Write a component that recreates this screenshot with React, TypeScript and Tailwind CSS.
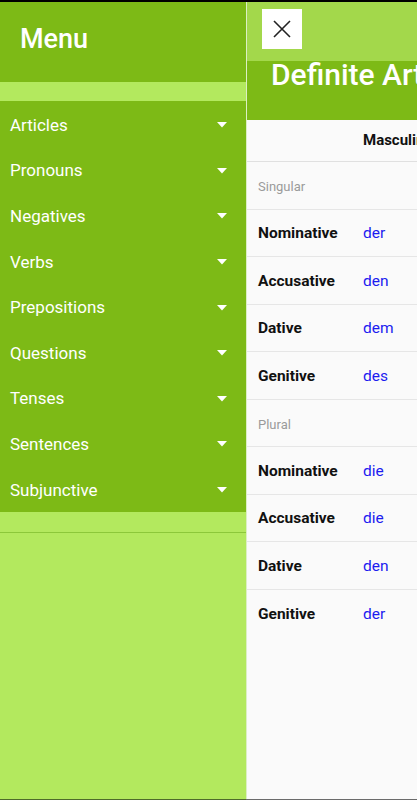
import React from "react";

const items = [
  "Articles",
  "Pronouns",
  "Negatives",
  "Verbs",
  "Prepositions",
  "Questions",
  "Tenses",
  "Sentences",
  "Subjunctive",
];

type Row = { kind: "group"; label: string } | { kind: "row"; label: string; value: string };

const rows: Row[] = [
  { kind: "group", label: "Singular" },
  { kind: "row", label: "Nominative", value: "der" },
  { kind: "row", label: "Accusative", value: "den" },
  { kind: "row", label: "Dative", value: "dem" },
  { kind: "row", label: "Genitive", value: "des" },
  { kind: "group", label: "Plural" },
  { kind: "row", label: "Nominative", value: "die" },
  { kind: "row", label: "Accusative", value: "die" },
  { kind: "row", label: "Dative", value: "den" },
  { kind: "row", label: "Genitive", value: "der" },
];

export default function App() {
  return (
    <div
      className="w-[417px] h-[800px] overflow-hidden flex flex-col bg-black"
      style={{ fontFamily: "Roboto, 'Noto Sans', sans-serif" }}
    >
      <div className="h-[2px] bg-black" />
      <div className="flex flex-1 min-h-0">
        {/* Menu drawer */}
        <div className="w-[246px] shrink-0 flex flex-col bg-[#b3e95e]">
          <div className="h-[80px] bg-[#7dba16] flex items-center pl-5 pb-[5px]">
            <span className="text-white text-[27px] font-medium leading-none">Menu</span>
          </div>
          <div className="h-[19px] bg-[#b3e95e]" />
          <div className="bg-[#7dba16] flex flex-col pt-[1px]">
            {items.map((it) => (
              <div key={it} className="h-[45.6px] flex items-center justify-between pl-[10px] pr-[19px] pt-[1px]">
                <span className="text-white text-[17px] leading-none">{it}</span>
                <svg width="10" height="6" viewBox="0 0 10 6">
                  <polygon points="0,0 10,0 5,5.5" fill="#ffffff" />
                </svg>
              </div>
            ))}
          </div>
          <div className="h-[20px] bg-[#b3e95e]" />
          <div className="h-[1px] bg-[#8cc83a]" />
          <div className="flex-1 bg-[#b3e95e]" />
        </div>
        {/* Content */}
        <div className="flex-1 flex flex-col border-l border-[#dcefc4] bg-[#fafafa] min-w-0">
          <div className="h-[59px] bg-[#a3d84b] pl-[15px] pt-[7px]">
            <div className="w-[40px] h-[40px] bg-white flex items-center justify-center">
              <svg width="20" height="20" viewBox="0 0 20 20">
                <path d="M2 2 L18 18 M18 2 L2 18" stroke="#222222" strokeWidth="1.6" fill="none" />
              </svg>
            </div>
          </div>
          <div className="h-[59px] bg-[#7dba16] pl-[24px] overflow-hidden whitespace-nowrap">
            <span className="text-white text-[30px] font-medium leading-none block -mt-[1px]">Definite Articles</span>
          </div>
          <div className="flex flex-col">
            <div className="h-[42px] flex items-center pl-[11px] border-b border-[#e0e0e0] whitespace-nowrap overflow-hidden">
              <div className="w-[105px] shrink-0" />
              <span className="text-[15px] font-bold text-[#111]">Masculine</span>
            </div>
            {rows.map((r, i) =>
              r.kind === "group" ? (
                <div key={i} className="h-[47.5px] flex items-center pl-[11px] pt-[3px] border-b border-[#e6e6e6]">
                  <span className="text-[13px] text-[#9a9a9a]">{r.label}</span>
                </div>
              ) : (
                <div
                  key={i}
                  className={`h-[47.5px] flex items-center pl-[11px] pt-[2px] whitespace-nowrap ${i === rows.length - 1 ? "" : "border-b border-[#e6e6e6]"}`}
                >
                  <span className="w-[105px] shrink-0 text-[15.5px] font-bold text-[#111]">{r.label}</span>
                  <span className="text-[15.5px] text-[#1c1cf0]">{r.value}</span>
                </div>
              )
            )}
          </div>
        </div>
      </div>
      <div className="h-[1px] flex">
        <div className="w-[246px] bg-[#4f6b2a]" />
        <div className="flex-1 bg-[#6b6b6b]" />
      </div>
    </div>
  );
}
